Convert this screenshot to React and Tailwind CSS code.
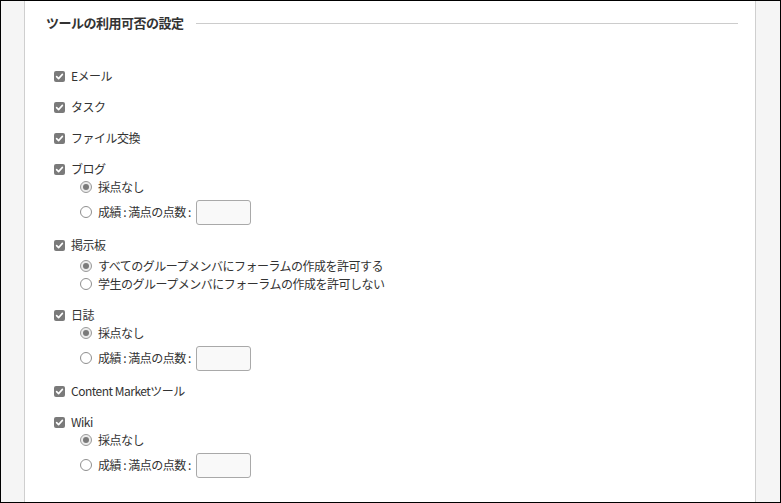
import React from 'react'

function Check() {
  return (
    <span className="grid h-[11px] w-[11px] shrink-0 place-items-center rounded-[2px] bg-[#7a7a7a]">
      <svg width="9" height="9" viewBox="0 0 9 9" fill="none">
        <path d="M1.6 4.6 L3.6 6.6 L7.4 2.4" stroke="#fff" strokeWidth="1.6" strokeLinecap="round" strokeLinejoin="round" />
      </svg>
    </span>
  )
}

function Radio({ on }) {
  return (
    <span className={`grid h-[12px] w-[12px] shrink-0 place-items-center rounded-full border ${on ? 'border-[#9a9a9a] bg-[#ececec]' : 'border-[#8f8f8f] bg-white'}`}>
      {on && <span className="h-[6px] w-[6px] rounded-full bg-[#7a7a7a]" />}
    </span>
  )
}

function ToolRow({ label, className = '' }) {
  return (
    <div className={`flex h-[18px] items-center gap-[6px] pl-[29px] ${className}`}>
      <Check />
      <span>{label}</span>
    </div>
  )
}

function RadioRow({ label, on, className = '' }) {
  return (
    <div className={`flex h-[18px] items-center gap-[6px] pl-[55px] ${className}`}>
      <Radio on={on} />
      <span>{label}</span>
    </div>
  )
}

function ScoreRows() {
  return (
    <>
      <RadioRow label="採点なし" on />
      <div className="mt-[2px] flex h-[28px] items-center gap-[6px] pl-[55px]">
        <Radio />
        <span>成績 : 満点の点数 :</span>
        <input className="-ml-[1px] h-[25px] w-[55px] rounded-[3px] border border-[#a9a9a9] bg-[#f9f9f9] outline-none" />
      </div>
    </>
  )
}

export default function App() {
  return (
    <div className="flex h-[503px] w-[781px] border border-black bg-white text-[12px] tracking-[-0.5px] text-[#333] font-['Noto_Sans_CJK_JP','Noto_Sans',sans-serif]">
      <aside className="w-[24px] shrink-0 border-r border-[#cfcfcf] bg-[#f5f5f5]" />
      <main className="flex-1 pr-[17px] pt-[12px]">
        <div className="flex h-[20px] items-center gap-[12px] pl-[21px]">
          <h2 className="text-[13px] font-semibold text-[#333]">ツールの利用可否の設定</h2>
          <div className="h-px flex-1 bg-[#cccccc]" />
        </div>
        <div className="mt-[34px] flex flex-col">
          <ToolRow label="Eメール" />
          <ToolRow label="タスク" className="mt-[13px]" />
          <ToolRow label="ファイル交換" className="mt-[13px]" />
          <ToolRow label="ブログ" className="mt-[13px]" />
          <ScoreRows />
          <ToolRow label="掲示板" className="mt-[10px]" />
          <RadioRow label="すべてのグループメンバにフォーラムの作成を許可する" on className="mt-[3px]" />
          <RadioRow label="学生のグループメンバにフォーラムの作成を許可しない" />
          <ToolRow label="日誌" className="mt-[13px]" />
          <ScoreRows />
          <ToolRow label="Content Marketツール" className="mt-[10px]" />
          <ToolRow label="Wiki" className="mt-[13px]" />
          <ScoreRows />
        </div>
      </main>
      <aside className="w-[25px] shrink-0 border-l border-[#cfcfcf] bg-[#f5f5f5]" />
    </div>
  )
}
